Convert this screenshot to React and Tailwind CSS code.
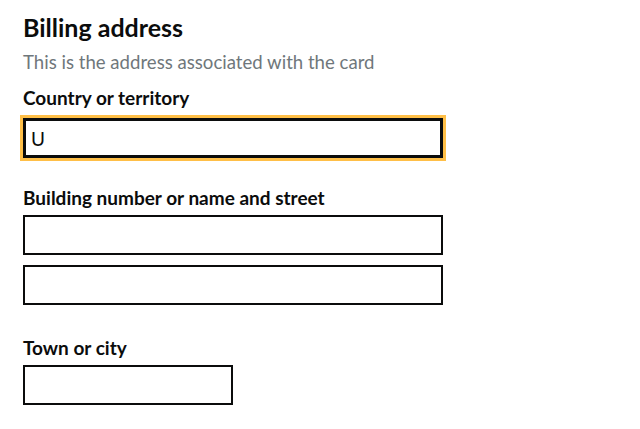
export default function App() {
  return (
    <div className="min-h-screen bg-white text-[#0b0c0c] font-['Lato',sans-serif] px-[23px] pt-[12px]">
      <h2 className="text-[25px] leading-[30px] font-bold">Billing address</h2>
      <p className="text-[18.6px] leading-[25px] text-[#6f777b] mt-[8px]">This is the address associated with the card</p>

      <div className="mb-[27px]">
        <label className="block text-[19px] leading-[25px] font-bold mt-[10px] mb-[8px]">Country or territory</label>
        <input
          type="text"
          defaultValue="U"
          className="block w-[420px] h-[40px] border-[3px] border-[#0b0c0c] outline-[3px] outline-solid outline-[#ffbf47] px-[5px] text-[19px]"
        />
      </div>

      <div className="mb-[30px]">
        <label className="block text-[19px] leading-[25px] font-bold mb-[5px]">Building number or name and street</label>
        <input type="text" className="block w-[420px] h-[40px] border-2 border-[#0b0c0c] px-[5px] text-[19px] outline-none" />
        <input type="text" className="block w-[420px] h-[40px] border-2 border-[#0b0c0c] px-[5px] text-[19px] outline-none mt-[10px]" />
      </div>

      <div>
        <label className="block text-[19px] leading-[25px] font-bold mb-[5px]">Town or city</label>
        <input type="text" className="block w-[210px] h-[40px] border-2 border-[#0b0c0c] px-[5px] text-[19px] outline-none" />
      </div>
    </div>
  );
}
